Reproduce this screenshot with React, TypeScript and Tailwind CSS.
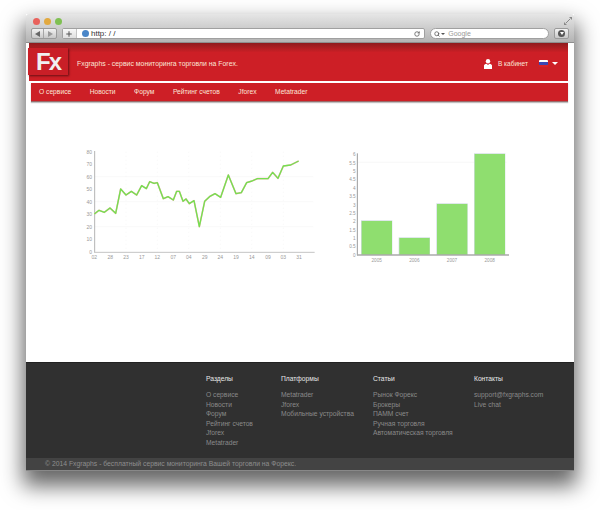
import { RotateCw, Search, Plus } from "lucide-react";

const navItems = ["О сервисе", "Новости", "Форум", "Рейтинг счетов", "Jforex", "Metatrader"];

const footerColumns = [
  { title: "Разделы", width: "w-[75px]", links: ["О сервисе", "Новости", "Форум", "Рейтинг счетов", "Jforex", "Metatrader"] },
  { title: "Платформы", width: "w-[92px]", links: ["Metatrader", "Jforex", "Мобильные устройства"] },
  { title: "Статьи", width: "w-[101px]", links: ["Рынок Форекс", "Брокеры", "ПАММ счет", "Ручная торговля", "Автоматическая торговля"] },
  { title: "Контакты", width: "w-[90px]", links: ["support@fxgraphs.com", "Live chat"] },
];

const linePoints =
  "73,222 87,211 103,217 120,204 137,220 152,147 168,165 184,154 200,165 215,137 229,146 239,125 252,130 262,128 280,176 294,170 310,180 320,154 328,154 339,184 348,177 358,191 372,182 388,260 404,184 420,169 435,161 452,172 475,105 498,161 514,158 530,128 546,123 562,116 594,116 608,97 624,115 640,78 662,75 686,63";

const lineYLabels = ["80", "70", "60", "50", "40", "30", "20", "10", "0"];
const lineXLabels = [
  ["02", 73], ["28", 121], ["23", 168], ["17", 215], ["12", 262], ["07", 310],
  ["04", 356], ["29", 404], ["24", 451], ["19", 498], ["14", 545], ["09", 594], ["03", 640], ["31", 687],
] as const;

const barYLabels = ["6", "5.5", "5", "4.5", "4", "3.5", "3", "2.5", "2", "1.5", "1", "0.5", "0"];
const bars = [
  { x: 65, y: 243, label: "2005" },
  { x: 178, y: 294, label: "2006" },
  { x: 291, y: 192, label: "2007" },
  { x: 404, y: 42, label: "2008" },
];

const LineChart = () => (
  <svg width="250" height="130" viewBox="0 0 750 390">
    {[110, 185, 260].map((y) => (
      <line key={y} x1="74" x2="730" y1={y} y2={y} stroke="#f6f6f6" strokeWidth="2" />
    ))}
    {[168, 262, 356, 451, 545, 640].map((x) => (
      <line key={x} x1={x} x2={x} y1="35" y2="337" stroke="#f6f6f6" strokeWidth="2" strokeDasharray="4 8" />
    ))}
    <line x1="74" x2="74" y1="33" y2="338" stroke="#b5b5b5" strokeWidth="3" />
    <line x1="73" x2="734" y1="337" y2="337" stroke="#c4c4c4" strokeWidth="3" />
    {lineYLabels.map((label, i) => (
      <text key={label} x="66" y={41 + i * 37.5} textAnchor="end" fontSize="15" fill="#999">{label}</text>
    ))}
    {lineXLabels.map(([label, x]) => (
      <text key={x} x={x} y="357" textAnchor="middle" fontSize="15" fill="#999">{label}</text>
    ))}
    <polyline points={linePoints} fill="none" stroke="#f0b9b2" strokeWidth="5" strokeLinejoin="round" />
    <polyline points={linePoints} fill="none" stroke="#74e050" strokeWidth="4" strokeLinejoin="round" />
  </svg>
);

const BarChart = () => (
  <svg width="180" height="130" viewBox="0 0 540 390">
    <line x1="54" x2="500" y1="67" y2="67" stroke="#f4f4f4" strokeWidth="2" />
    {bars.map((bar) => (
      <g key={bar.label}>
        <rect x={bar.x - 2} y={bar.y - 2} width="94" height={345 - bar.y + 2} fill="#cfdde0" />
        <rect x={bar.x} y={bar.y} width="91" height={345 - bar.y} fill="#8fde6f" />
        <text x={bar.x + 45} y="365" textAnchor="middle" fontSize="14" fill="#999">{bar.label}</text>
      </g>
    ))}
    <line x1="52" x2="52" y1="40" y2="346" stroke="#9a9a9a" strokeWidth="3" />
    <line x1="51" x2="507" y1="345" y2="345" stroke="#aaa" strokeWidth="5" />
    {barYLabels.map((label, i) => (
      <text key={label} x="47" y={49 + i * 25.1} textAnchor="end" fontSize="14" fill="#999">{label}</text>
    ))}
  </svg>
);

const BrowserBar = () => (
  <div className="h-[29px] shrink-0 rounded-t-[3px] bg-gradient-to-b from-[#e6e6e6] to-[#b4b4b4] border-b border-[#8e8e8e] flex flex-col px-[5px] relative">
    <div className="flex gap-[4px] h-[14px] items-center pl-[2px] pt-[1px]">
      <span className="w-[7px] h-[7px] rounded-full bg-[#e9625c]" />
      <span className="w-[7px] h-[7px] rounded-full bg-[#e2a93f]" />
      <span className="w-[7px] h-[7px] rounded-full bg-[#7fc052]" />
    </div>
    <div className="flex items-center h-[11px]">
      <div className="flex w-[26px] h-[11px] rounded-[2px] border border-[#9a9a9a] bg-gradient-to-b from-[#f2f2f2] to-[#c8c8c8] text-[#666]">
        <span className="flex-1 flex items-center justify-center border-r border-[#a5a5a5]">
          <span className="w-0 h-0 border-y-[3px] border-y-transparent border-r-[5px] border-r-[#666]" />
        </span>
        <span className="flex-1 flex items-center justify-center">
          <span className="w-0 h-0 border-y-[3px] border-y-transparent border-l-[5px] border-l-[#999]" />
        </span>
      </div>
      <div className="ml-[5px] w-[364px] h-[11px] rounded-[2px] border border-[#a0a0a0] bg-white flex items-center">
        <span className="w-[14px] h-full flex items-center justify-center border-r border-[#c4c4c4] bg-gradient-to-b from-[#f8f8f8] to-[#e0e0e0]">
          <Plus size={8} strokeWidth={3} color="#555" />
        </span>
        <span className="ml-[5px] w-[7px] h-[7px] rounded-full bg-[#4a86c8]" />
        <span className="ml-[2px] text-[8px] leading-none text-[#333]">http: / /</span>
        <RotateCw size={6} strokeWidth={3} color="#555" className="ml-auto mr-[4px]" />
      </div>
      <div className="ml-[5px] w-[119px] h-[11px] rounded-full border border-[#a0a0a0] bg-white flex items-center pl-[3px]">
        <Search size={6} strokeWidth={3} color="#555" />
        <span className="w-0 h-0 ml-[1px] border-x-[2px] border-x-transparent border-t-[2px] border-t-[#555]" />
        <span className="ml-[3px] text-[7px] leading-none text-[#999]">Google</span>
      </div>
      <div className="ml-[5px] w-[15px] h-[11px] rounded-[2px] border border-[#9a9a9a] bg-gradient-to-b from-[#f2f2f2] to-[#c8c8c8] flex items-center justify-center">
        <span className="w-[7px] h-[7px] rounded-full bg-[#555] flex items-center justify-center">
          <span className="w-0 h-0 border-x-[2px] border-x-transparent border-t-[3px] border-t-white" />
        </span>
      </div>
    </div>
    {/* resize arrows, top right */}
    <svg className="absolute right-[2px] top-[3px]" width="8" height="8" viewBox="0 0 8 8">
      <path d="M5 0h3v3zM0 8V5l3 3z" fill="#888" />
      <path d="M6 2L2 6" stroke="#888" strokeWidth="1" />
    </svg>
  </div>
);

const Header = () => (
  <header className="relative bg-white pl-[3px] pr-[6px]">
    <div className="h-[38px] bg-gradient-to-b from-[#8f1a1d] via-[#cd1f26] via-[25%] to-[#cd1f26] flex items-center text-[6.9px] leading-[9px] text-[#fbe6d8] pl-[48px] pr-[10px] pt-[3px]">
      <span>Fxgraphs - сервис мониторинга торговли на Forex.</span>
      <svg className="ml-auto" width="8" height="10" viewBox="0 0 8 10">
        <circle cx="4" cy="2.3" r="2.2" fill="#fff" />
        <path d="M0 10V6.5C0 5.5 1 5 2.5 4.700L4 6l1.5-1.300C7 5 8 5.500 8 6.500V10z" fill="#fff" />
      </svg>
      <span className="ml-[6px] text-[6.5px]">В кабинет</span>
      <span className="ml-[11px] w-[9px] h-[7px] flex flex-col rounded-[1px] overflow-hidden">
        <span className="flex-1 bg-white" />
        <span className="flex-1 bg-[#3b46b5]" />
        <span className="flex-1 bg-[#d8232a]" />
      </span>
      <span className="ml-[4px] w-0 h-0 border-x-[3px] border-x-transparent border-t-[3px] border-t-white" />
    </div>
    <div className="h-[2px]" />
    <nav className="ml-[2px] h-[19px] bg-[#cd1f26] border-b border-[#9a6a6a] shadow-[0_1px_1px_rgba(0,0,0,.25)] flex items-center gap-[18.500px] pl-[8px] text-[6.7px] text-[#fbe6d8]">
      {navItems.map((item) => (
        <span key={item}>{item}</span>
      ))}
    </nav>
    {/* logo hangs over the header edge */}
    <div className="absolute left-[2px] top-[5px] w-[40px] h-[27px] bg-[#c91f27] shadow-[1px_1px_2px_rgba(0,0,0,.5)] flex items-center justify-center">
      <span className="text-[#f0f0f0] text-[24px] leading-none font-bold tracking-[-2px]">Fx</span>
    </div>
  </header>
);

const Footer = () => (
  <footer className="mt-auto">
    <div className="h-[96px] bg-[#303030] border-t border-[#222] flex pl-[180px] pt-[11px]">
      {footerColumns.map((column) => (
        <div key={column.title} className={`${column.width} shrink-0`}>
          <div className="text-[6.7px] leading-[9px] text-[#e8e8e8] mb-[7px] whitespace-nowrap">{column.title}</div>
          {column.links.map((link) => (
            <div key={link} className="text-[6.7px] leading-[9.6px] text-[#8a8a8a] whitespace-nowrap">{link}</div>
          ))}
        </div>
      ))}
    </div>
    <div className="h-[13px] bg-[#434343] border-b border-[#888] flex items-center pl-[19px] text-[6.8px] text-[#8e8e8e]">
      © 2014 Fxgraphs - бесплатный сервис мониторинга Вашей торговли на Форекс.
    </div>
  </footer>
);

export default function App() {
  return (
    <div className="w-[600px] h-[510px] bg-white pt-[14px] pl-[26px] font-['Liberation_Sans',sans-serif]">
      <div className="w-[548px] h-[457px] flex flex-col bg-white shadow-[0_12px_20px_3px_rgba(0,0,0,.6)]">
        <BrowserBar />
        <Header />
        <main className="flex pl-[44px] pt-[38px] gap-[20px]">
          <LineChart />
          <BarChart />
        </main>
        <Footer />
      </div>
    </div>
  );
}
